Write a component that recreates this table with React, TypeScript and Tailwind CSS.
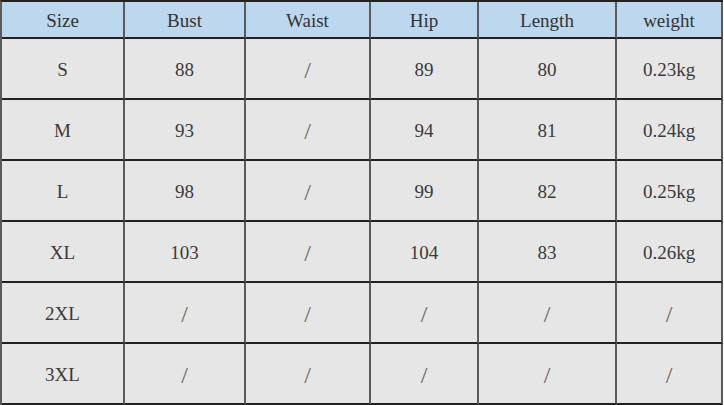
import React from "react";

const header = ["Size", "Bust", "Waist", "Hip", "Length", "weight"];
const rows = [
  ["S", "88", "/", "89", "80", "0.23kg"],
  ["M", "93", "/", "94", "81", "0.24kg"],
  ["L", "98", "/", "99", "82", "0.25kg"],
  ["XL", "103", "/", "104", "83", "0.26kg"],
  ["2XL", "/", "/", "/", "/", "/"],
  ["3XL", "/", "/", "/", "/", "/"],
];

export default function App() {
  return (
    <div className="w-[724px] h-[405px] bg-white" style={{ fontFamily: '"Liberation Serif", "Times New Roman", serif' }}>
      <div className="w-[723px] border-t-2 border-l-2 border-t-[#222] border-l-[#5a5a5a]">
        <div className="grid grid-cols-[123px_121px_125px_108px_138px_106px] h-[37px] bg-[#bdd7ee]">
          {header.map((h, i) => (
            <div
              key={i}
              className="flex items-center justify-center border-r-2 border-b-2 border-r-[#5a5a5a] border-b-[#222] text-[19px] text-[#333] pt-[3px]"
            >
              {h}
            </div>
          ))}
        </div>
        {rows.map((r, ri) => (
          <div key={ri} className="grid grid-cols-[123px_121px_125px_108px_138px_106px] h-[61px] bg-[#e7e6e6]">
            {r.map((c, ci) => (
              <div
                key={ci}
                className={
                  "flex items-center justify-center border-r-2 border-b-2 border-r-[#5a5a5a] border-b-[#222] pt-[3px] " +
                  (c === "/" ? "text-[24px] text-[#666]" : "text-[19px] text-[#3a3a3a]")
                }
              >
                {c}
              </div>
            ))}
          </div>
        ))}
      </div>
    </div>
  );
}
